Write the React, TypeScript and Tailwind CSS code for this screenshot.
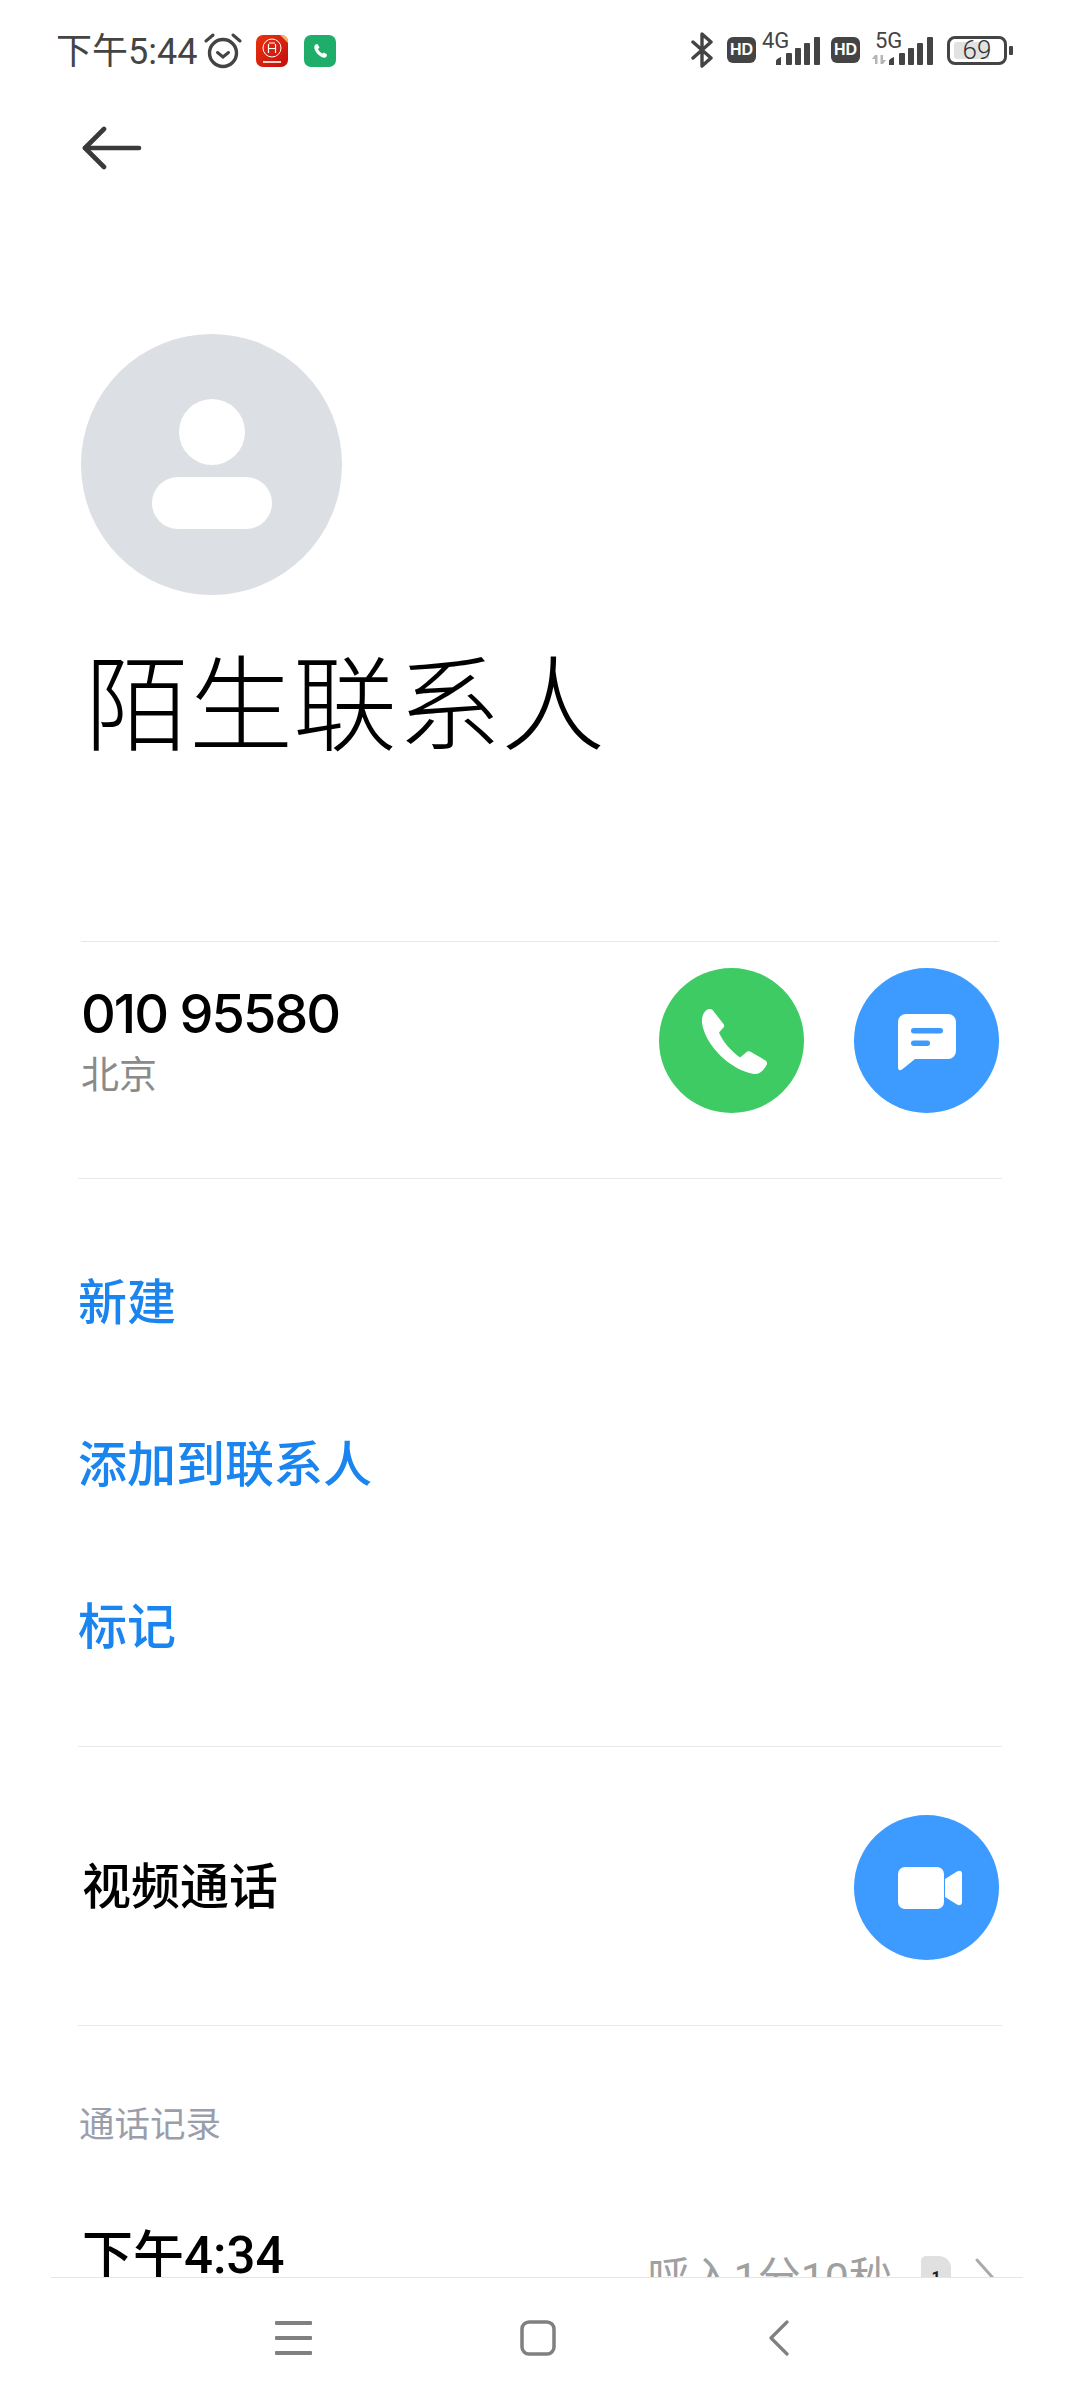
const CJK = "font-['Roboto','Noto_Sans_CJK_SC',sans-serif]";

function SignalBars({ className }: { className?: string }) {
  return (
    <svg className={className} width="44" height="28" viewBox="0 0 44 28" fill="#444">
      <path d="M0 28 V24 Q0 22 5 20 V28 Z" />
      <rect x="10" y="16" width="6" height="12" rx="1" />
      <rect x="19" y="11" width="6" height="17" rx="1" />
      <rect x="28" y="6" width="6" height="22" rx="1" />
      <rect x="38" y="0" width="6" height="28" rx="1" />
    </svg>
  );
}

function HdBadge() {
  return (
    <span className="flex h-[26px] w-[29px] items-center justify-center rounded-[6px] bg-[#444] font-['Liberation_Sans',sans-serif] text-[16px] leading-none font-bold text-white">
      HD
    </span>
  );
}

function StatusBar() {
  return (
    <div className="flex h-[100px] shrink-0 items-start justify-between pt-[32px] pr-[67px] pl-[56px]">
      <div className="flex items-center">
        <span className="mt-[2px] h-[36px] text-[36px] leading-[36px] text-[#444]">下午5:44</span>
        {/* alarm */}
        <svg className="ml-[7px]" width="38" height="36" viewBox="0 0 38 36" fill="none" stroke="#444" strokeLinecap="round">
          <circle cx="19" cy="20" r="13.5" strokeWidth="3.4" />
          <path d="M13.5 19.5 L19 24 L24.5 19.5" strokeWidth="3" />
          <path d="M2 8 L9 2" strokeWidth="3" />
          <path d="M36 8 L29 2" strokeWidth="3" />
        </svg>
        {/* shopping app */}
        <svg className="ml-[14px]" width="32" height="32" viewBox="0 0 32 32">
          <defs>
            <linearGradient id="redApp" x1="0" y1="0" x2="1" y2="1">
              <stop offset="0" stopColor="#e8340f" />
              <stop offset="1" stopColor="#c40d10" />
            </linearGradient>
          </defs>
          <rect width="32" height="32" rx="7" fill="url(#redApp)" />
          <path d="M24 0 H25 Q32 0 32 7 V8 Z" fill="#f5b26b" />
          <circle cx="16" cy="13" r="9" fill="none" stroke="#fff" strokeWidth="1" />
          <path d="M12.5 9 V18 M19.5 9 V18 M12.5 13.5 H19.5 M13 8 H19" stroke="#fff" strokeWidth="1.2" fill="none" />
          <rect x="7" y="26" width="18" height="2" fill="#fbd0c0" />
        </svg>
        {/* phone app */}
        <svg className="ml-[16px]" width="32" height="32" viewBox="0 0 32 32">
          <rect width="32" height="32" rx="7" fill="#1fae6a" />
          <path d="M11.5 9.5 L13.5 9 L15.5 12.5 L14 14 C15 16 16.5 17.5 18.5 18.5 L20 17.5 L23 19.5 L22.5 21.5 C21.5 23 19.5 23 17.5 22 C14 20 11.5 17 10.5 14 C10 12 10.3 10.5 11.5 9.5Z" fill="#fff" />
        </svg>
      </div>

      <div className="flex items-start">
        <svg width="23" height="36" viewBox="0 0 23 36" fill="none" stroke="#444" strokeWidth="3.4" strokeLinejoin="round" strokeLinecap="round">
          <path d="M2 10 L20 26 L11 34 V2 L20 10 L2 26" />
        </svg>
        <div className="mt-[5px] ml-[13px]">
          <HdBadge />
        </div>
        <div className="relative ml-[20px] h-[36px] w-[44px]">
          <span className="absolute -top-px -left-[14px] font-['Roboto',sans-serif] text-[22px] leading-[20px] text-[#444]">4G</span>
          <SignalBars className="absolute top-[5px] left-0" />
        </div>
        <div className="mt-[5px] ml-[11px]">
          <HdBadge />
        </div>
        <div className="relative ml-[29px] h-[36px] w-[44px]">
          <span className="absolute -top-px -left-[14px] font-['Roboto',sans-serif] text-[22px] leading-[20px] text-[#444]">5G</span>
          <svg className="absolute top-[23px] -left-[17px]" width="14" height="9" viewBox="0 0 14 9" fill="#b5b5b5">
            <path d="M3 0 H5.5 V9 H3 V4 H0 Z" />
            <path d="M8.5 0 H11 V5 H14 L11 9 H8.5 Z" />
          </svg>
          <SignalBars className="absolute top-[5px] left-0" />
        </div>
        <div className="mt-[4px] ml-[14px] flex items-center">
          <div className="relative h-[29px] w-[60px] rounded-[8px] border-[3px] border-[#444]">
            <div className="absolute top-[3px] bottom-[3px] left-[4px] w-[35px] rounded-l-[3px] bg-[#e2e2e2]" />
            <span className="absolute inset-0 text-center font-['Roboto',sans-serif] text-[26px] leading-[23px] font-light text-[#333]">69</span>
          </div>
          <div className="ml-[2px] h-[9px] w-[4px] rounded-[1px] bg-[#444]" />
        </div>
      </div>
    </div>
  );
}

function ActionCircle({ color, children }: { color: string; children: React.ReactNode }) {
  return (
    <div className={`flex h-[145px] w-[145px] shrink-0 items-center justify-center rounded-full ${color}`}>
      <svg width="144" height="144" viewBox="0 0 144 144">
        {children}
      </svg>
    </div>
  );
}

export default function App() {
  return (
    <div className={`flex h-[2400px] w-[1080px] flex-col overflow-hidden bg-white ${CJK}`}>
      <StatusBar />

      <div className="min-h-0 flex-1 overflow-hidden">
        <div className="flex h-[96px] items-center pl-[82px]">
          <svg width="60" height="44" viewBox="0 0 60 44" fill="none" stroke="#3a3a3a" strokeWidth="4.6" strokeLinecap="round" strokeLinejoin="round">
            <path d="M57 22 H3" />
            <path d="M22 3 L3 22 L22 41" />
          </svg>
        </div>

        {/* avatar placeholder */}
        <div className="mt-[138px] ml-[81px] flex h-[261px] w-[261px] flex-col items-center rounded-full bg-[#dcdfe4] pt-[65px]">
          <div className="h-[66px] w-[66px] rounded-full bg-white" />
          <div className="mt-[12px] h-[52px] w-[120px] rounded-full bg-white" />
        </div>

        <h1 className="mt-[53px] ml-[85px] h-[120px] text-[104px] leading-[120px] font-light text-black">陌生联系人</h1>

        <div className="mx-[81px] mt-[173px] h-[237px] border-t border-[#e8e8e8] pt-[26px]">
          <div className="flex items-start justify-between">
            <div className="pt-[16px]">
              <div className="font-['Inter','Noto_Sans_CJK_SC',sans-serif] text-[54px] leading-[60px] font-medium tracking-[-2px] text-black">010 95580</div>
              <div className="mt-[7px] text-[38px] leading-[48px] text-[#8a8a8a]">北京</div>
            </div>
            <div className="flex gap-[50px]">
              <ActionCircle color="bg-[#3ecb64]">
                <path
                  d="M46 41.5 C48 39.5 51.5 39.5 53 41.5 L63.5 55 C64.5 56.5 64.5 58 63 59 L59 63.5 C63 73 70 81 80 88.5 L86 83.5 C87.5 82 89.5 82 91 83 L105.5 91.5 C107.5 93 107.5 95 106 97 C103 102 99 105.5 94 105 C70 101 45 76 42 54 C41.5 48.5 43 44.5 46 41.5Z"
                  fill="#fff"
                />
              </ActionCircle>
              <ActionCircle color="bg-[#3d9bff]">
                <path d="M51 45 H93 a8 8 0 0 1 8 8 V82 a8 8 0 0 1 -8 8 H60 L47 100.5 C45 102 43 101 43 98.5 V53 a8 8 0 0 1 8-8Z" fill="#fff" />
                <rect x="56" y="59" width="32" height="5.5" rx="2.75" fill="#3d9bff" />
                <rect x="56" y="71.5" width="19" height="5.5" rx="2.75" fill="#3d9bff" />
              </ActionCircle>
            </div>
          </div>
        </div>

        <div className="mx-[78px] border-t border-[#e8e8e8] pt-[44px] pb-[37px] text-[49px] leading-[162px] font-medium text-[#1a85ee]">
          <div className="h-[162px]">新建</div>
          <div className="h-[162px]">添加到联系人</div>
          <div className="h-[162px]">标记</div>
        </div>

        <div className="mx-[78px] flex h-[280px] items-center justify-between border-y border-[#e8e8e8] pt-[3px] pr-[3px] pl-[4px]">
          <span className="text-[49px] font-medium text-black">视频通话</span>
          <ActionCircle color="bg-[#3d9bff]">
            <rect x="43" y="51" width="46" height="42" rx="7" fill="#fff" />
            <path d="M90 63 L102 55.5 C105 54 107 55 107 58 V86 C107 89 105 90 102 88.5 L90 81 Z" fill="#fff" />
          </ActionCircle>
        </div>

        <div className="mx-[79px] mt-[76px] text-[35.5px] leading-[46px] text-[#9a9eab]">通话记录</div>

        <div className="mt-[78px] mr-[85px] ml-[82px] flex items-start justify-between">
          <span className="text-[51px] leading-[60px] font-medium text-black">下午4:34</span>
          <div className="mt-[28px] flex items-center">
            <span className="text-[43px] leading-[48px] text-[#a0a0a0]">呼入1分10秒</span>
            <div className="ml-[29px] flex h-[44px] w-[30px] items-center justify-center rounded-[5px] rounded-tr-[12px] bg-[#e0e0e0] text-[16px] font-bold text-[#222]">1</div>
            <svg className="ml-[24px]" width="20" height="40" viewBox="0 0 20 40" fill="none" stroke="#aaa" strokeWidth="3" strokeLinecap="round">
              <path d="M2 2 L18 20 L2 38" />
            </svg>
          </div>
        </div>
      </div>

      {/* navigation bar */}
      <div className="mr-[57px] ml-[51px] flex h-[123px] shrink-0 items-start border-t border-[#e6e6e6] bg-white pt-[42px]">
        <div className="flex items-start pl-[224px]">
          <svg width="37" height="36" viewBox="0 0 37 36" fill="#808080">
            <rect y="1" width="37" height="4" rx="1" />
            <rect y="16" width="37" height="4" rx="1" />
            <rect y="31" width="37" height="4" rx="1" />
          </svg>
          <svg className="ml-[208px]" width="36" height="36" viewBox="0 0 36 36" fill="none" stroke="#808080" strokeWidth="3.5">
            <rect x="2" y="2" width="32" height="32" rx="7" />
          </svg>
          <svg className="ml-[212px]" width="22" height="36" viewBox="0 0 22 36" fill="none" stroke="#808080" strokeWidth="3.2" strokeLinecap="round" strokeLinejoin="round">
            <path d="M19 2 L3 18 L19 34" />
          </svg>
        </div>
      </div>
    </div>
  );
}
